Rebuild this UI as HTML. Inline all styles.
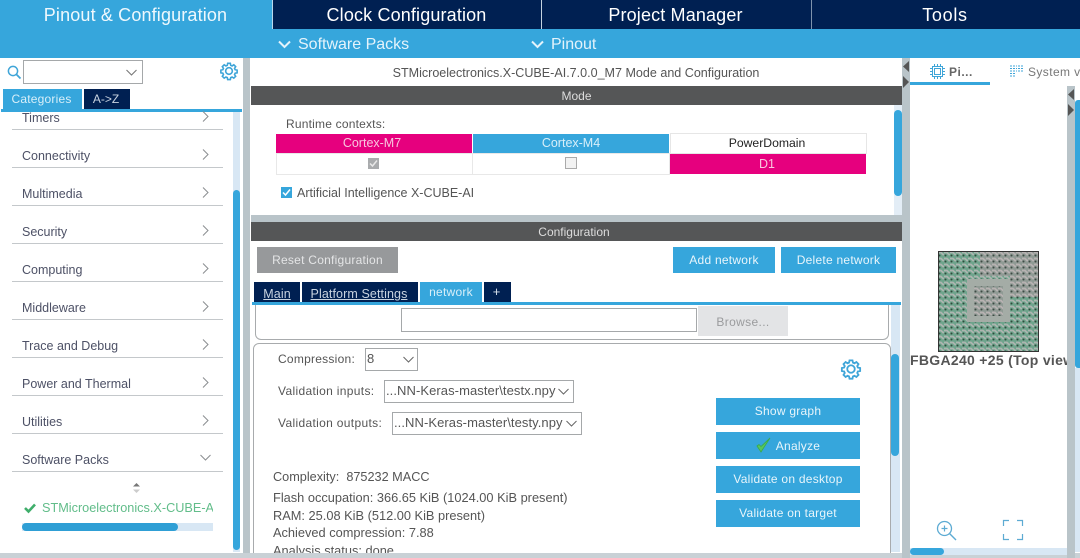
<!DOCTYPE html>
<html><head><meta charset="utf-8"><style>
*{box-sizing:border-box}
html,body{margin:0;padding:0;width:1080px;height:558px;overflow:hidden;background:#fff}
body{position:relative;font-family:"Liberation Sans",sans-serif;color:#555}
.a{position:absolute}
.t{position:absolute;white-space:nowrap;line-height:16px}
.c{text-align:center}
.hd{color:#fff;font-size:18px;line-height:22px;top:4px;text-align:center;position:absolute;letter-spacing:.15px}
.sub{color:#e4f3fb;font-size:16px;line-height:20px;top:34px;position:absolute;white-space:nowrap}
.cat{position:absolute;left:22px;font-size:12.5px;color:#4d5166;line-height:16px;white-space:nowrap}
.ln{position:absolute;left:12px;width:211px;height:1px;background:#c4c8cb}
.btn{position:absolute;background:#36a6dc;color:#e8f5fb;font-size:12px;text-align:center;letter-spacing:.25px;white-space:nowrap}
svg{position:absolute;overflow:visible}
</style></head><body>
<div class="a" style="left:0;top:0;width:1080px;height:29px;background:#002052"></div>
<div class="a" style="left:0;top:0;width:272px;height:29px;background:#36a6dc"></div>
<div class="a" style="left:0;top:29px;width:1080px;height:29px;background:#36a6dc"></div>
<div class="a" style="left:541px;top:0;width:1px;height:29px;background:#c5d3e0"></div>
<div class="a" style="left:811px;top:0;width:1px;height:29px;background:#7f93ad"></div>
<div class="a" style="left:272px;top:0;width:1px;height:29px;background:#b9d8ec"></div>
<div class="hd" style="left:0;width:271px;color:#eef8fd">Pinout &amp; Configuration</div>
<div class="hd" style="left:272px;width:269px">Clock Configuration</div>
<div class="hd" style="left:542px;width:267px">Project Manager</div>
<div class="hd" style="left:812px;width:266px;letter-spacing:.7px">Tools</div>
<svg style="left:278px;top:40px" width="13" height="9"><path d="M1 1.500L6.500 7L12 1.500" fill="none" stroke="#e4f3fb" stroke-width="2"/></svg>
<div class="sub" style="left:298px;top:35px">Software Packs</div>
<svg style="left:531px;top:40px" width="13" height="9"><path d="M1 1.500L6.500 7L12 1.500" fill="none" stroke="#e4f3fb" stroke-width="2"/></svg>
<div class="sub" style="left:551px;top:35px">Pinout</div>

<!-- left panel -->
<svg style="left:7px;top:65px" width="15" height="15"><circle cx="6" cy="6" r="4.600" fill="none" stroke="#3fa5d8" stroke-width="1.500"/><path d="M9.500 9.500L13.500 13.500" stroke="#3fa5d8" stroke-width="1.800"/></svg>
<div class="a" style="left:23px;top:60px;width:120px;height:24px;border:1px solid #a5a8aa;background:#fff"></div>
<svg style="left:126px;top:69px" width="11" height="7"><path d="M.5 1L5.500 6L10.500 1" fill="none" stroke="#777" stroke-width="1.100"/></svg>
<svg style="left:221px;top:63px" width="16" height="16" viewBox="0 0 24 24"><path d="M10 1.500h4l.6 3 2 .9 2.600-1.700 2.800 2.800-1.700 2.600.9 2 3 .6v4l-3 .6-.9 2 1.700 2.600-2.800 2.800-2.600-1.700-2 .9-.6 3h-4l-.6-3-2-.9-2.600 1.700-2.800-2.800 1.700-2.600-.9-2-3-.6v-4l3-.6.9-2-1.700-2.600 2.800-2.800 2.600 1.700 2-.9z" transform="translate(0 -1)" fill="none" stroke="#3fa5d8" stroke-width="2.400"/><circle cx="12" cy="12" r="5" fill="none" stroke="#3fa5d8" stroke-width="2.400"/></svg>
<div class="a" style="left:3px;top:89px;width:79px;height:21px;background:#36a6dc"></div>
<div class="a" style="left:84px;top:89px;width:46px;height:21px;background:#002052"></div>
<div class="t c" style="left:2px;top:90px;width:79px;font-size:12px;color:#d8eff9;letter-spacing:.2px;line-height:18px">Categories</div>
<div class="t c" style="left:83px;top:90px;width:46px;font-size:12px;color:#c8d3e0;line-height:18px">A-&gt;Z</div>
<div class="a" style="left:1px;top:109px;width:241px;height:3px;background:#36a6dc"></div>
<div class="a" style="left:233px;top:112px;width:7px;height:440px;background:#d8e7f4"></div>
<div class="a" style="left:233px;top:190px;width:7px;height:360px;background:#36a6dc;border-radius:4px"></div>
<div class="a" style="left:243px;top:58px;width:7px;height:500px;background:#b9c4c9"></div>

<div class="cat" style="top:110px">Timers</div><div class="ln" style="top:129px"></div>
<div class="cat" style="top:148px">Connectivity</div><div class="ln" style="top:167px"></div>
<div class="cat" style="top:186px">Multimedia</div><div class="ln" style="top:205px"></div>
<div class="cat" style="top:224px">Security</div><div class="ln" style="top:243px"></div>
<div class="cat" style="top:262px">Computing</div><div class="ln" style="top:281px"></div>
<div class="cat" style="top:300px">Middleware</div><div class="ln" style="top:319px"></div>
<div class="cat" style="top:338px">Trace and Debug</div><div class="ln" style="top:357px"></div>
<div class="cat" style="top:376px">Power and Thermal</div><div class="ln" style="top:395px"></div>
<div class="cat" style="top:414px">Utilities</div><div class="ln" style="top:433px"></div>
<div class="cat" style="top:452px">Software Packs</div><div class="ln" style="top:471px"></div>
<svg style="left:202px;top:111px" width="7" height="11"><path d="M1 .5L6 5.500L1 10.500" fill="none" stroke="#8a8d90" stroke-width="1"/></svg>
<svg style="left:202px;top:149px" width="7" height="11"><path d="M1 .5L6 5.500L1 10.500" fill="none" stroke="#8a8d90" stroke-width="1"/></svg>
<svg style="left:202px;top:187px" width="7" height="11"><path d="M1 .5L6 5.500L1 10.500" fill="none" stroke="#8a8d90" stroke-width="1"/></svg>
<svg style="left:202px;top:225px" width="7" height="11"><path d="M1 .5L6 5.500L1 10.500" fill="none" stroke="#8a8d90" stroke-width="1"/></svg>
<svg style="left:202px;top:263px" width="7" height="11"><path d="M1 .5L6 5.500L1 10.500" fill="none" stroke="#8a8d90" stroke-width="1"/></svg>
<svg style="left:202px;top:301px" width="7" height="11"><path d="M1 .5L6 5.500L1 10.500" fill="none" stroke="#8a8d90" stroke-width="1"/></svg>
<svg style="left:202px;top:339px" width="7" height="11"><path d="M1 .5L6 5.500L1 10.500" fill="none" stroke="#8a8d90" stroke-width="1"/></svg>
<svg style="left:202px;top:377px" width="7" height="11"><path d="M1 .5L6 5.500L1 10.500" fill="none" stroke="#8a8d90" stroke-width="1"/></svg>
<svg style="left:202px;top:415px" width="7" height="11"><path d="M1 .5L6 5.500L1 10.500" fill="none" stroke="#8a8d90" stroke-width="1"/></svg>
<svg style="left:200px;top:454px" width="11" height="7"><path d="M.5 1L5.500 6L10.500 1" fill="none" stroke="#8a8d90" stroke-width="1"/></svg>
<svg style="left:132px;top:483px" width="9" height="11"><path d="M4.500 0L8 3.500H1z" fill="#777"/><path d="M4.500 10L8 6.500H1z" fill="#ccc"/></svg>
<svg style="left:24px;top:503px" width="12" height="10"><path d="M1 5L4.500 8.500L11 1.500" fill="none" stroke="#3fae6b" stroke-width="2.600"/></svg>
<div class="t" style="left:42px;top:500px;width:171px;overflow:hidden;font-size:12.7px;color:#62bd8a">STMicroelectronics.X-CUBE-A</div>
<div class="a" style="left:22px;top:523px;width:191px;height:8px;background:#d8e7f4"></div>
<div class="a" style="left:22px;top:523px;width:156px;height:8px;background:#2f9fd5;border-radius:4px"></div>

<!-- center top -->
<div class="t c" style="left:250px;top:65px;width:652px;font-size:12.55px;color:#555">STMicroelectronics.X-CUBE-AI.7.0.0_M7 Mode and Configuration</div>
<div class="a" style="left:251px;top:86px;width:651px;height:19px;background:#555657"></div>
<div class="t c" style="left:251px;top:88px;width:651px;font-size:12px;color:#ddd">Mode</div>
<div class="t" style="left:286px;top:116px;font-size:12px;color:#555;letter-spacing:.2px">Runtime contexts:</div>
<div class="a" style="left:276px;top:134px;width:196px;height:19px;background:#e6007e"></div>
<div class="a" style="left:473px;top:134px;width:196px;height:19px;background:#36a6dc"></div>
<div class="a" style="left:670px;top:133px;width:197px;height:21px;border:1px solid #e6e6e6"></div>
<div class="a" style="left:276px;top:153px;width:197px;height:22px;border:1px solid #e8e8e8"></div>
<div class="a" style="left:473px;top:153px;width:197px;height:22px;border:1px solid #e8e8e8;border-left:0"></div>
<div class="a" style="left:670px;top:154px;width:196px;height:20px;background:#e6007e"></div>
<div class="t c" style="left:276px;top:135px;width:192px;font-size:12.5px;color:#f8c6df">Cortex-M7</div>
<div class="t c" style="left:473px;top:135px;width:196px;font-size:12.5px;color:#d8eff9">Cortex-M4</div>
<div class="t c" style="left:670px;top:135px;width:194px;font-size:12.2px;color:#222">PowerDomain</div>
<div class="t c" style="left:670px;top:156px;width:194px;font-size:12.5px;color:#f8c6df">D1</div>
<div class="a" style="left:368px;top:158px;width:11px;height:11px;background:#a9abad"></div>
<svg style="left:368px;top:158px" width="11" height="11"><path d="M2 5.500L4.500 8L9 2.500" fill="none" stroke="#e8e8e8" stroke-width="1.500"/></svg>
<div class="a" style="left:565px;top:157px;width:12px;height:12px;background:#f2f2f2;border:1px solid #aaa"></div>
<div class="a" style="left:281px;top:187px;width:11px;height:11px;background:#36a6dc"></div>
<svg style="left:281px;top:187px" width="11" height="11"><path d="M2 5.500L4.500 8L9 2.500" fill="none" stroke="#fff" stroke-width="1.500"/></svg>
<div class="t" style="left:297px;top:185px;font-size:12.5px;color:#555">Artificial Intelligence X-CUBE-AI</div>
<div class="a" style="left:894px;top:105px;width:8px;height:110px;background:#e3edf6"></div>
<div class="a" style="left:894px;top:110px;width:8px;height:86px;background:#36a6dc;border-radius:4px"></div>
<div class="a" style="left:251px;top:215px;width:651px;height:7px;background:#b9c4c9"></div>

<!-- configuration -->
<div class="a" style="left:251px;top:222px;width:651px;height:19px;background:#555657"></div>
<div class="t c" style="left:251px;top:224px;width:646px;font-size:12px;color:#ddd">Configuration</div>
<div class="btn" style="left:257px;top:247px;width:141px;height:26px;line-height:27px;background:#97999b;color:#e4e5e6">Reset Configuration</div>
<div class="btn" style="left:673px;top:247px;width:102px;height:26px;line-height:27px">Add network</div>
<div class="btn" style="left:781px;top:247px;width:115px;height:26px;line-height:27px">Delete network</div>

<div class="a" style="left:254px;top:282px;width:46px;height:21px;background:#002052"></div>
<div class="a" style="left:302px;top:282px;width:116px;height:21px;background:#002052"></div>
<div class="a" style="left:420px;top:282px;width:62px;height:21px;background:#36a6dc"></div>
<div class="a" style="left:484px;top:282px;width:27px;height:21px;background:#002052"></div>
<div class="t c" style="left:254px;top:286px;width:46px;font-size:12.5px;color:#c8d3e0;text-decoration:underline;letter-spacing:.1px">Main</div>
<div class="t c" style="left:302px;top:286px;width:114px;font-size:12.5px;color:#c8d3e0;text-decoration:underline;letter-spacing:.1px">Platform Settings</div>
<div class="t c" style="left:420px;top:284px;width:62px;font-size:12px;color:#d8eff9;letter-spacing:.25px">network</div>
<div class="t c" style="left:484px;top:284px;width:25px;font-size:13px;color:#d8e2ee">+</div>
<div class="a" style="left:252px;top:302px;width:649px;height:3px;background:#36a6dc"></div>

<div class="a" style="left:255px;top:305px;width:634px;height:35px;border:1px solid #a8abad;border-top:0;border-radius:0 0 6px 6px;background:#fff"></div>
<div class="a" style="left:401px;top:308px;width:296px;height:24px;border:1px solid #a5a8aa;background:#fff"></div>
<div class="a" style="left:698px;top:306px;width:90px;height:30px;background:#e3e4e6"></div>
<div class="t c" style="left:698px;top:314px;width:90px;font-size:12px;color:#9a9b9d;letter-spacing:.35px">Browse...</div>

<div class="a" style="left:253px;top:343px;width:638px;height:240px;border:1px solid #a8abad;border-radius:6px;background:#fff"></div>
<div class="a" style="left:891px;top:305px;width:9px;height:247px;background:#d8e7f4"></div>
<div class="a" style="left:891px;top:354px;width:8px;height:102px;background:#36a6dc;border-radius:4px"></div>

<div class="t" style="left:278px;top:351px;font-size:12px;color:#555;letter-spacing:.25px">Compression:</div>
<div class="a" style="left:365px;top:348px;width:53px;height:23px;border:1px solid #a5a8aa;background:#fff"></div>
<div class="t" style="left:367px;top:351px;font-size:13px;color:#555">8</div>
<svg style="left:403px;top:356px" width="11" height="7"><path d="M.5 1L5.500 6L10.500 1" fill="none" stroke="#666" stroke-width="1"/></svg>
<div class="t" style="left:278px;top:383px;font-size:12px;color:#555;letter-spacing:.33px">Validation inputs:</div>
<div class="a" style="left:384px;top:380px;width:190px;height:23px;border:1px solid #a5a8aa;background:#fff"></div>
<div class="t" style="left:386px;top:383px;font-size:13px;color:#555;letter-spacing:.07px">...NN-Keras-master\testx.npy</div>
<svg style="left:558px;top:388px" width="11" height="7"><path d="M.5 1L5.500 6L10.500 1" fill="none" stroke="#666" stroke-width="1"/></svg>
<div class="t" style="left:278px;top:415px;font-size:12px;color:#555;letter-spacing:.33px">Validation outputs:</div>
<div class="a" style="left:392px;top:412px;width:190px;height:23px;border:1px solid #a5a8aa;background:#fff"></div>
<div class="t" style="left:394px;top:415px;font-size:13px;color:#555;letter-spacing:.07px">...NN-Keras-master\testy.npy</div>
<svg style="left:566px;top:420px" width="11" height="7"><path d="M.5 1L5.500 6L10.500 1" fill="none" stroke="#666" stroke-width="1"/></svg>

<div class="t" style="left:273px;top:469px;font-size:12.7px;color:#555">Complexity:&nbsp; 875232 MACC</div>
<div class="t" style="left:273px;top:490px;font-size:12.8px;color:#555">Flash occupation: 366.65 KiB (1024.00 KiB present)</div>
<div class="t" style="left:273px;top:508px;font-size:12.8px;color:#555">RAM: 25.08 KiB (512.00 KiB present)</div>
<div class="t" style="left:273px;top:525px;font-size:12.8px;color:#555">Achieved compression: 7.88</div>
<div class="t" style="left:273px;top:543px;font-size:12.8px;color:#555">Analysis status: done</div>

<svg style="left:842px;top:360px" width="18" height="18" viewBox="0 0 24 24"><path d="M10 1.500h4l.6 3 2 .9 2.600-1.700 2.800 2.800-1.700 2.600.9 2 3 .6v4l-3 .6-.9 2 1.700 2.600-2.800 2.800-2.600-1.700-2 .9-.6 3h-4l-.6-3-2-.9-2.600 1.700-2.800-2.800 1.700-2.600-.9-2-3-.6v-4l3-.6.9-2-1.700-2.600 2.800-2.800 2.600 1.700 2-.9z" transform="translate(0 -1)" fill="none" stroke="#3fa5d8" stroke-width="2.400"/><circle cx="12" cy="12" r="5" fill="none" stroke="#3fa5d8" stroke-width="2.400"/></svg>

<div class="btn" style="left:716px;top:398px;width:144px;height:27px;line-height:27px">Show graph</div>
<div class="btn" style="left:716px;top:432px;width:144px;height:27px;line-height:28px;padding-left:20px">Analyze</div>
<svg style="left:756px;top:437px" width="15" height="16"><path d="M1 9L5 15L14 1L5 9.500L3 7.500z" fill="#55c65e" stroke="#3aa84a" stroke-width=".8"/></svg>
<div class="btn" style="left:716px;top:466px;width:144px;height:27px;line-height:27px">Validate on desktop</div>
<div class="btn" style="left:716px;top:500px;width:144px;height:27px;line-height:27px">Validate on target</div>

<!-- bottom strip -->
<div class="a" style="left:0;top:553px;width:1080px;height:5px;background:#c9d1d6"></div>

<!-- right panel -->
<div class="a" style="left:902px;top:58px;width:8px;height:500px;background:#b9c4c9"></div>
<svg style="left:902px;top:60px" width="8" height="34"><path d="M7 1V12L1 6.500z" fill="#555"/><path d="M1 16V28L7 22z" fill="#555"/></svg>
<svg style="left:930px;top:64px" width="15" height="15"><rect x="2.500" y="2.500" width="10" height="10" fill="none" stroke="#3fa5d8" stroke-width="1"/><rect x="4.500" y="4.500" width="6" height="6" fill="none" stroke="#3fa5d8" stroke-width="1"/><path d="M4.500 0v2M7.500 0v2M10.500 0v2M4.500 13v2M7.500 13v2M10.500 13v2M0 4.500h2M0 7.500h2M0 10.500h2M13 4.500h2M13 7.500h2M13 10.500h2" stroke="#3fa5d8" stroke-width="1"/></svg>
<div class="t" style="left:949px;top:64px;font-size:12px;font-weight:bold;color:#666;letter-spacing:.5px">Pi...</div>
<div class="a" style="left:910px;top:82px;width:80px;height:3px;background:#36a6dc"></div>
<svg style="left:1010px;top:65px" width="14" height="13"><path d="M0 1h7M8 1h2M11 1h3M0 3.500h7M8 3.500h2M11 3.500h3M0 6h7M8 6h2M11 6h3M0 8.500h5M0 11h5" stroke="#3fa5d8" stroke-width="1" stroke-dasharray="2 1"/></svg>
<div class="t" style="left:1028px;top:64px;font-size:12px;color:#777;letter-spacing:.4px">System v</div>
<div class="a" style="left:1067px;top:86px;width:8px;height:472px;background:#b9c4c9"></div>
<svg style="left:1067px;top:88px" width="8" height="30"><path d="M7 1V12L1 6.500z" fill="#555"/><path d="M1 16V28L7 22z" fill="#555"/></svg>
<div class="a" style="left:1075px;top:100px;width:5px;height:268px;background:#36a6dc;border-radius:3px 0 0 3px"></div>
<div class="a" style="left:1075px;top:368px;width:5px;height:184px;background:#d8e7f4"></div>

<svg style="left:938px;top:251px" width="101" height="101">
<defs><pattern id="p" width="6" height="6" patternUnits="userSpaceOnUse"><rect width="6" height="6" fill="#8f9a94"/><path d="M0 1.500h3l2 2h1" stroke="#b8b2b2" stroke-width="1.700" fill="none"/><circle cx="1.500" cy="4.500" r="1" fill="#3e4a45"/></pattern>
<pattern id="g" width="6" height="6" patternUnits="userSpaceOnUse"><rect width="6" height="6" fill="#6ea48c"/><path d="M0 1.500h3l2 2h1" stroke="#adb5b0" stroke-width="1.700" fill="none"/><circle cx="1.500" cy="4.500" r="1" fill="#2f4a3d"/></pattern></defs>
<rect x=".5" y=".5" width="100" height="100" fill="url(#g)" stroke="#333"/>
<rect x="42" y="1" width="58" height="24" fill="url(#p)"/><rect x="72" y="24" width="28" height="22" fill="url(#p)"/>
<rect x="29" y="28" width="43" height="43" fill="#a4aca6"/>
<rect x="36" y="35" width="29" height="30" fill="url(#p)"/>
</svg>
<div class="t" style="left:910px;top:352px;width:157px;overflow:hidden;font-size:14px;font-weight:bold;color:#555;letter-spacing:.3px">FBGA240 +25 (Top view)</div>

<svg style="left:936px;top:520px" width="21" height="21"><circle cx="8.500" cy="8.500" r="7" fill="none" stroke="#5dabd3" stroke-width="1.300"/><path d="M8.500 5.500v6M5.500 8.500h6" stroke="#5dabd3" stroke-width="1.200"/><path d="M13.500 13.500L20 20" stroke="#5dabd3" stroke-width="1.400"/></svg>
<svg style="left:1003px;top:520px" width="20" height="20"><path d="M.5 6V.5H6M14 .5h5.500V6M.5 14v5.500H6M14 19.500h5.500V14" fill="none" stroke="#5dabd3" stroke-width="1.200"/></svg>
<div class="a" style="left:910px;top:548px;width:157px;height:7px;background:#d8e7f4"></div>
<div class="a" style="left:910px;top:548px;width:34px;height:7px;background:#36a6dc;border-radius:4px"></div>
</body></html>
